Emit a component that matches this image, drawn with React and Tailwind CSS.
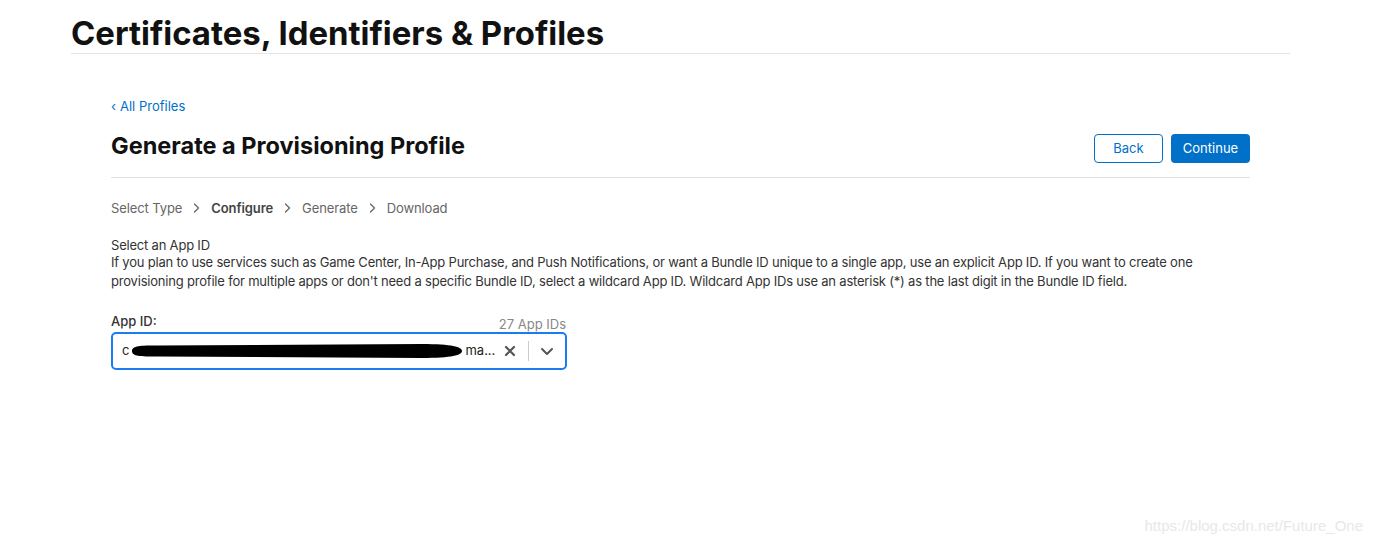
import React from "react";

function Chevron() {
  return (
    <svg width="7" height="10" viewBox="0 0 7 10" className="mx-[11px]">
      <path d="M1.5 1 L5.5 5 L1.5 9" fill="none" stroke="#666" strokeWidth="1.3" strokeLinecap="round" strokeLinejoin="round" />
    </svg>
  );
}

export default function App() {
  const font = { fontFamily: "Inter, 'Noto Sans', sans-serif" };
  return (
    <div className="relative w-[1373px] h-[544px] bg-white text-[#333]" style={font}>
      <div className="ml-[71px] w-[1219px] pt-[14px]">
        <h1 className="text-[32.9px] leading-[38px] font-bold text-[#111]">
          Certificates, Identifiers &amp; Profiles
        </h1>
        <div className="mt-[1px] h-px bg-[#e5e5e5]" />

        <div className="px-[40px] pt-[44px]">
          <a className="text-[13px] leading-[16px] text-[#0070c9] flex items-center gap-[4px]">
            <span className="text-[13px]">‹</span> All Profiles
          </a>
          <div className="mt-[14px] flex items-center justify-between">
            <h2 className="text-[23.5px] leading-[30px] font-bold text-[#111]">Generate a Provisioning Profile</h2>
            <div className="flex gap-[8px] mt-[6px]">
              <button className="w-[69px] h-[29px] rounded-[4px] border border-[#0070c9] text-[13px] text-[#0070c9]">
                Back
              </button>
              <button className="w-[79px] h-[29px] rounded-[4px] bg-[#0070c9] text-[13px] text-white">
                Continue
              </button>
            </div>
          </div>
          <div className="mt-[14px] h-px bg-[#e0e0e0]" />

          <div className="mt-[22px] flex items-center text-[13px] leading-[16px] text-[#666] tracking-[-0.1px]">
            <span>Select Type</span>
            <Chevron />
            <span className="font-semibold text-[#444]">Configure</span>
            <Chevron />
            <span>Generate</span>
            <Chevron />
            <span>Download</span>
          </div>

          <div className="mt-[20px] text-[13px] leading-[19px] text-[#333] tracking-[-0.2px]">
            <div>Select an App ID</div>
            <p className="w-[1100px] -mt-[2px]">
              If you plan to use services such as Game Center, In-App Purchase, and Push Notifications, or want a Bundle ID unique to a single app, use an explicit App ID. If you want to create one provisioning profile for multiple apps or don't need a specific Bundle ID, select a wildcard App ID. Wildcard App IDs use an asterisk (*) as the last digit in the Bundle ID field.
            </p>
          </div>

          <div className="mt-[22px] w-[456px]">
            <div className="flex items-end justify-between">
              <span className="text-[13px] leading-[16px] font-medium text-[#333]">App ID:</span>
              <span className="text-[13px] leading-[16px] text-[#888] relative top-[3px] mr-[1px]">27 App IDs</span>
            </div>
            <div className="mt-[3px] h-[38px] rounded-[5px] border-2 border-[#1a7cf5] flex items-center pl-[9px] pr-[8px]">
              <div className="flex-1 flex items-center text-[13px] text-[#222]">
                <span>c</span>
                <svg width="334" height="18" viewBox="0 0 334 18" className="-ml-[1px]">
                  <path d="M4 9 C4 5 8 3 30 3.5 L294 2 C324 2 334 5 334 9 C334 13 324 16 294 16 L30 14.5 C8 15 4 13 4 9 Z" fill="#000" />
                </svg>
                <span className="ml-[3px]">ma...</span>
              </div>
              <svg width="12" height="12" viewBox="0 0 12 12" className="mr-[12px]">
                <path d="M2 2 L10 10 M10 2 L2 10" stroke="#555" strokeWidth="2.2" strokeLinecap="round" />
              </svg>
              <div className="w-px h-[20px] bg-[#ccc]" />
              <svg width="14" height="9" viewBox="0 0 14 9" className="ml-[11px] mr-[3px]">
                <path d="M2 2 L7 7 L12 2" fill="none" stroke="#555" strokeWidth="2" strokeLinecap="round" strokeLinejoin="round" />
              </svg>
            </div>
          </div>
        </div>
      </div>

      <div
        className="absolute right-[10px] bottom-[7px] text-[15px] text-[#e8e8e8]"
        style={{ fontFamily: "'Liberation Sans', Arial, sans-serif" }}
      >
        https://blog.csdn.net/Future_One
      </div>
    </div>
  );
}
